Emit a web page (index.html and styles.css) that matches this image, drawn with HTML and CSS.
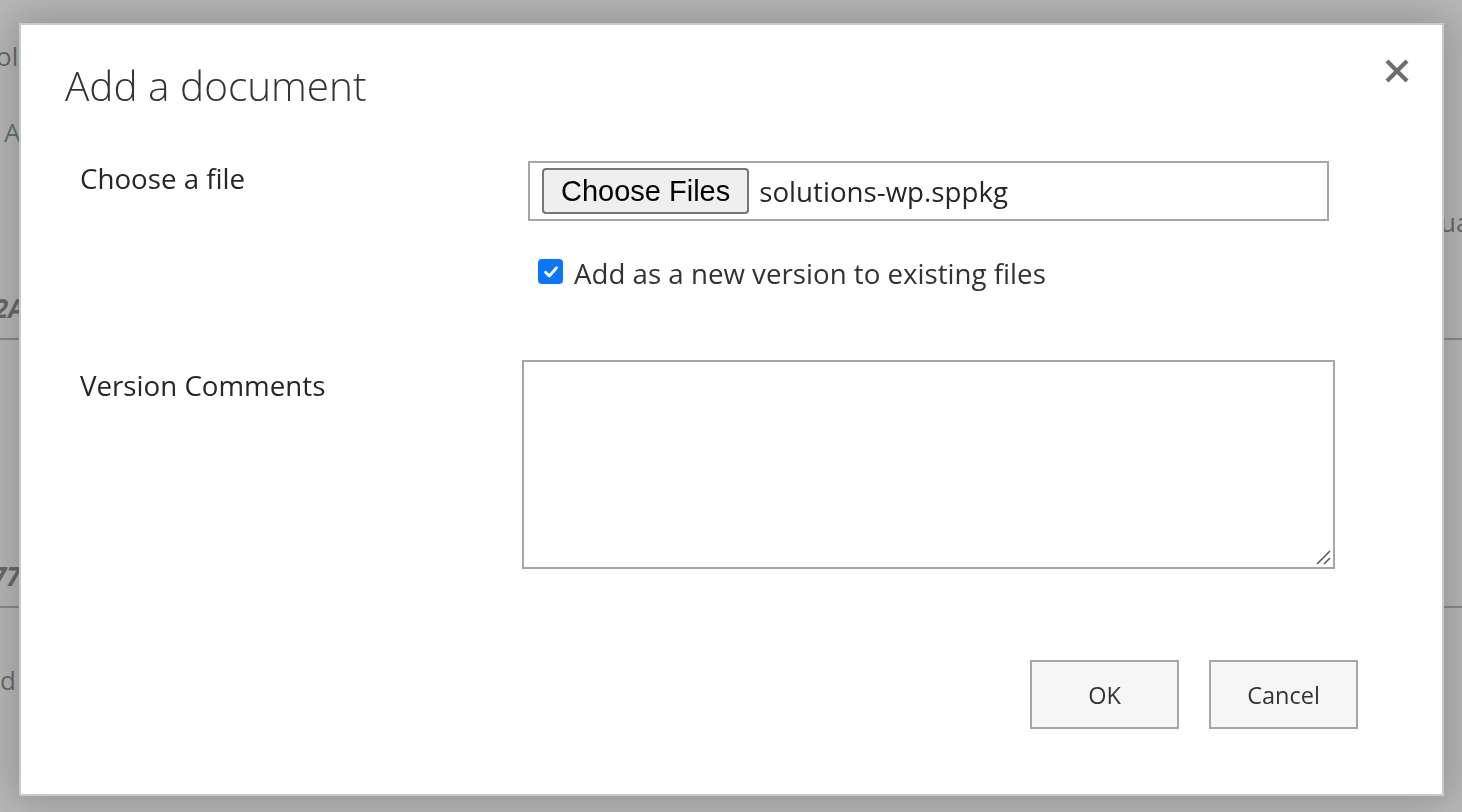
FILE: index.html
```html
<!DOCTYPE html>
<html lang="en">
<head>
<meta charset="utf-8">
<title>Add a document</title>
<link rel="stylesheet" href="styles.css">
</head>
<body>
<div class="page">
  <div class="bg-text bg-ol">ol</div>
  <div class="bg-text bg-a">A</div>
  <div class="bg-text bg-2a">2A</div>
  <div class="bg-line bg-line1"></div>
  <div class="bg-text bg-77">77</div>
  <div class="bg-line bg-line2"></div>
  <div class="bg-text bg-d">d</div>
  <div class="bg-text bg-ua">ua</div>
</div>
<div class="overlay"></div>
<div class="dialog" role="dialog" aria-labelledby="dlg-title">
  <button class="close" aria-label="Close">
    <svg width="26" height="26" viewBox="0 0 26 26"><path d="M3 3 L23 23 M23 3 L3 23" stroke="#6e6e6e" stroke-width="4.2" stroke-linecap="butt" fill="none"/></svg>
  </button>
  <h1 id="dlg-title" class="title">Add a document</h1>
  <div class="form">
    <div class="row row-file">
      <label class="label">Choose a file</label>
      <div class="field">
        <div class="file-box">
          <span class="file-btn">Choose Files</span>
          <span class="file-name">solutions-wp.sppkg</span>
        </div>
        <label class="check">
          <span class="checkbox">
            <svg width="18" height="18" viewBox="0 0 18 18"><path d="M3.5 9.2 L7.3 13 L14.6 4.8" stroke="#fff" stroke-width="2.8" fill="none" stroke-linecap="round" stroke-linejoin="round"/></svg>
          </span>
          <span class="check-text">Add as a new version to existing files</span>
        </label>
      </div>
    </div>
    <div class="row row-comments">
      <label class="label">Version Comments</label>
      <div class="field">
        <div class="textarea">
          <svg class="grip" width="16" height="16" viewBox="0 0 16 16"><path d="M2 15 L15 2 M9 15 L15 9" stroke="#5a5a5a" stroke-width="1.6" fill="none"/></svg>
        </div>
      </div>
    </div>
  </div>
  <div class="actions">
    <button class="btn">OK</button>
    <button class="btn">Cancel</button>
  </div>
</div>
</body>
</html>
```

FILE: styles.css
```css
html, body {
  margin: 0;
  padding: 0;
  width: 1462px;
  height: 812px;
  overflow: hidden;
  font-family: "Open Sans", "Noto Sans", sans-serif;
}

.page {
  position: relative;
  width: 1462px;
  height: 812px;
  background: #fff;
}

.bg-text {
  position: absolute;
  color: #333;
  font-size: 26px;
}
.bg-ol { left: -4px; top: 38px; }
.bg-a { left: 4px; top: 114px; color: #0d5752; }
.bg-2a { left: -6px; top: 290px; font-weight: 700; font-style: italic; }
.bg-77 { left: -8px; top: 558px; font-weight: 700; font-style: italic; }
.bg-d { left: 0; top: 662px; }
.bg-ua { left: 1440px; top: 204px; }
.bg-line {
  position: absolute;
  left: 0;
  right: 0;
  height: 2px;
  background: #8a8a8a;
}
.bg-line1 { top: 338px; }
.bg-line2 { top: 606px; }

.overlay {
  position: fixed;
  inset: 0;
  background: rgba(140, 140, 140, 0.62);
}

.dialog {
  position: fixed;
  left: 19px;
  top: 23px;
  width: 1421px;
  height: 769px;
  background: #fff;
  border: 2px solid #c9c9c9;
  box-shadow: 0 0 40px 6px rgba(0, 0, 0, 0.22);
  box-sizing: content-box;
  color: #262626;
}

.close {
  position: absolute;
  right: 32px;
  top: 33px;
  width: 26px;
  height: 26px;
  padding: 0;
  border: 0;
  background: none;
}

.title {
  margin: 0;
  padding: 33px 0 0 44px;
  font-size: 40.5px;
  font-weight: 300;
  line-height: 56px;
  color: #333;
}

.form {
  padding: 0 0 0 59px;
}

.row {
  display: grid;
  grid-template-columns: 442px 1fr;
}
.row-file { margin-top: 47px; }
.row-comments { margin-top: 68px; }

.label {
  font-size: 27.7px;
  line-height: 38px;
  color: #262626;
}
.row-file .label { margin-top: -2px; }
.row-comments .label { margin-top: 6px; }

.field {
  display: flex;
  flex-direction: column;
}

.file-box {
  width: 801px;
  height: 60px;
  margin-left: 6px;
  border: 2px solid #a6a6a6;
  display: flex;
  align-items: center;
  box-sizing: border-box;
  padding-left: 12px;
}
.file-btn {
  font-family: "Liberation Sans", Arial, sans-serif;
  font-size: 29px;
  color: #000;
  background: #efefef;
  border: 2px solid #767676;
  border-radius: 4px;
  height: 46px;
  box-sizing: border-box;
  padding: 0 17px;
  display: flex;
  align-items: center;
}
.file-name {
  margin-left: 10px;
  font-size: 27.7px;
  color: #262626;
}

.check {
  display: flex;
  align-items: center;
  margin: 33px 0 0 16px;
}
.checkbox {
  width: 25px;
  height: 25px;
  border-radius: 4px;
  background: #0b75ff;
  display: flex;
  align-items: center;
  justify-content: center;
  margin-top: -3px;
}
.check-text {
  margin-left: 11px;
  font-size: 27.7px;
  line-height: 38px;
  color: #333;
}

.textarea {
  position: relative;
  width: 813px;
  height: 209px;
  border: 2px solid #a6a6a6;
  box-sizing: border-box;
}
.grip {
  position: absolute;
  right: 2px;
  bottom: 2px;
}

.actions {
  display: flex;
  justify-content: flex-end;
  gap: 30px;
  padding: 91px 84px 0 0;
}
.btn {
  width: 149px;
  height: 69px;
  background: #f6f6f6;
  border: 2px solid #a6a6a6;
  font-family: "Open Sans", "Noto Sans", sans-serif;
  font-size: 23.5px;
  color: #333;
  padding: 0;
}
```
